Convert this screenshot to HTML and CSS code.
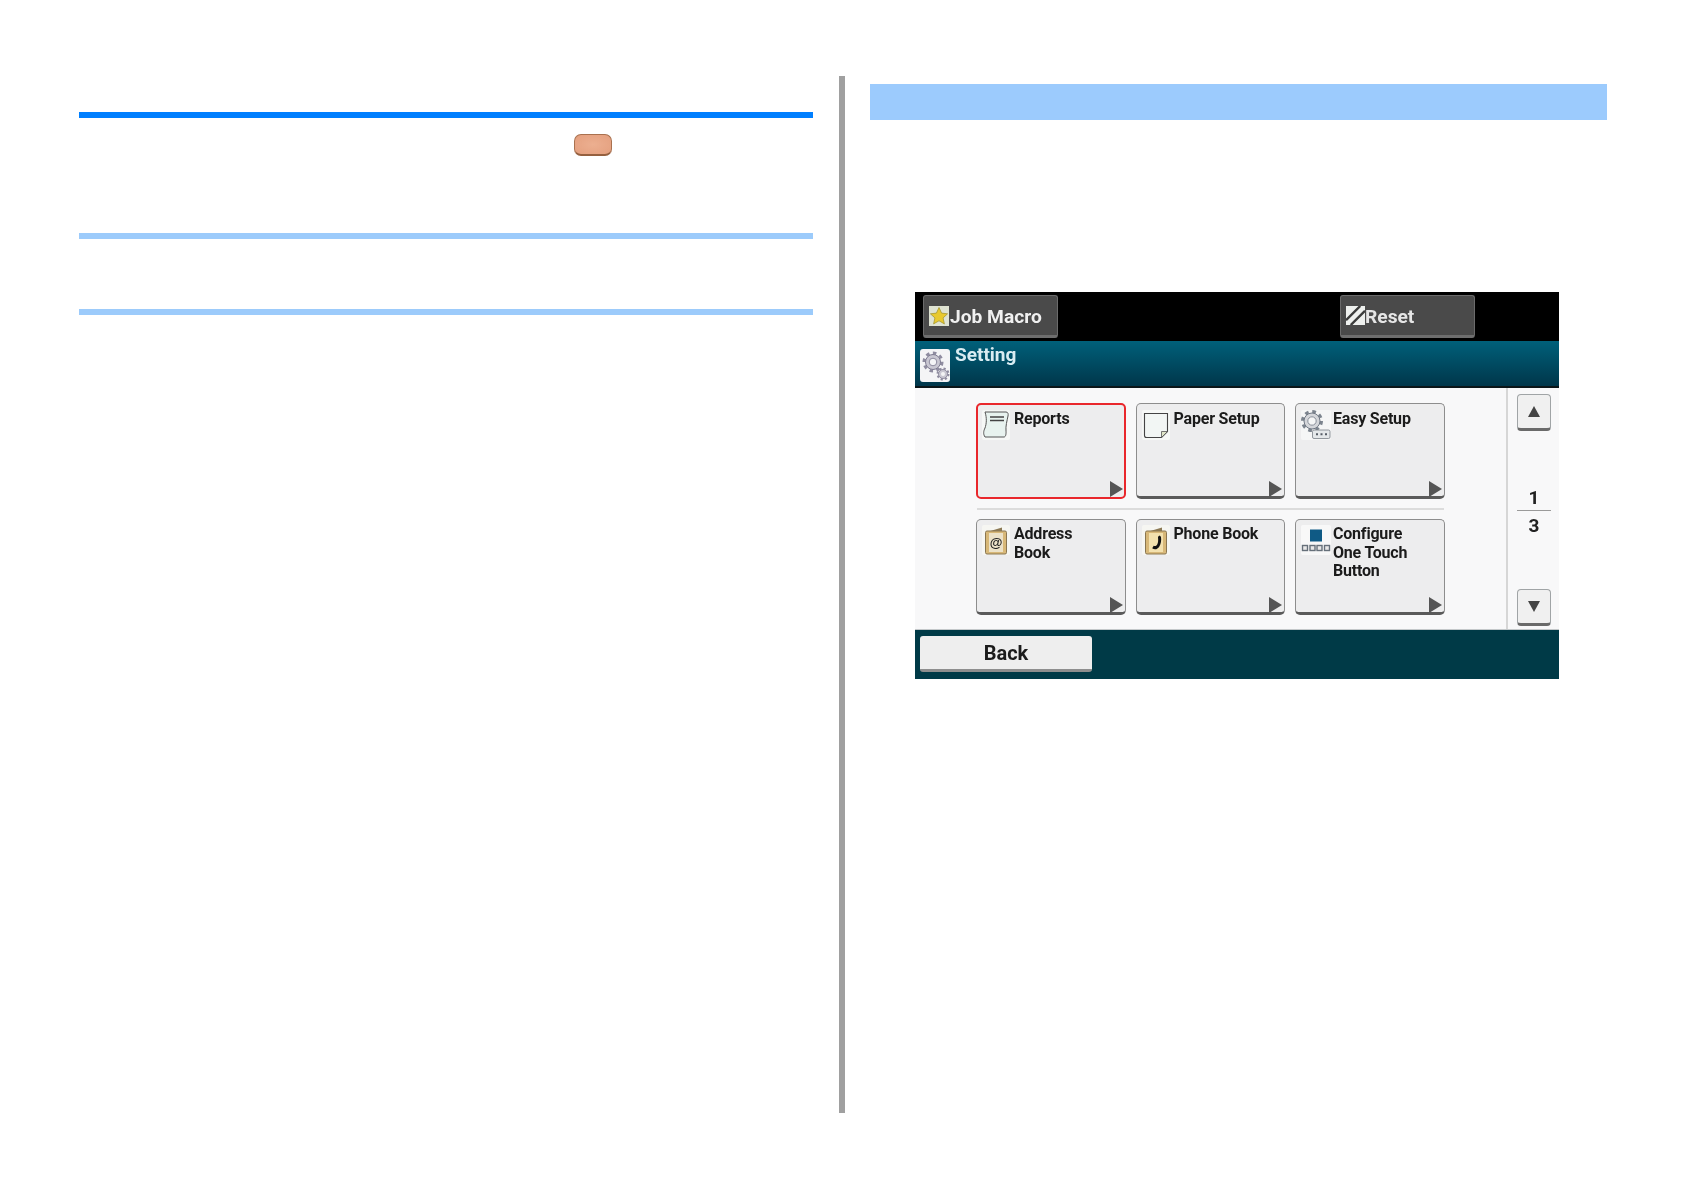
FILE: index.html
```html
<!DOCTYPE html>
<html lang="en">
<head>
<meta charset="utf-8">
<title>Setting</title>
<link rel="stylesheet" href="styles.css">
</head>
<body>
<main class="sheet">
  <section class="left">
    <div class="rule rule-strong"></div>
    <div class="key-row"><span class="key"></span></div>
    <div class="rule rule-light"></div>
    <div class="gap-row"></div>
    <div class="rule rule-light"></div>
  </section>
  <div class="divider"></div>
  <section class="right">
    <div class="band"></div>
    <div class="screen">
      <header class="topbar">
        <div class="hw-btn">
          <svg class="hw-icon" viewBox="0 0 20 20"><rect width="20" height="20" fill="#dfe3d2"/><path d="M10 1.500l2.600 5.600 6 .7-4.500 4.100 1.300 6L10 14.800 4.600 17.900l1.300-6L1.400 7.800l6-.7z" fill="#e8c92e" stroke="#9c8f2a" stroke-width=".7"/></svg>
          <span>Job Macro</span>
        </div>
        <div class="hw-btn hw-reset">
          <svg class="hw-icon hw-icon-small" viewBox="0 0 20 20"><rect width="20" height="20" fill="#eef0ee"/><path d="M0 15L15 0M5 20L20 5" stroke="#3c3c3c" stroke-width="2.600"/></svg>
          <span>Reset</span>
        </div>
      </header>
      <div class="titlebar">
        <div class="title-icon">
          <svg viewBox="0 0 30 33"><rect width="30" height="33" rx="3" fill="#f4f4f6"/><circle cx="13" cy="13" r="9" fill="none" stroke="#8f8ca0" stroke-width="3" stroke-dasharray="3.500 3.500"/><circle cx="13" cy="13" r="7.500" fill="#c9c7d2" stroke="#7d7a90"/><circle cx="13" cy="13" r="3.800" fill="#f4f4f6" stroke="#8d8a9e"/><circle cx="23" cy="25" r="5.500" fill="none" stroke="#8f8ca0" stroke-width="2" stroke-dasharray="2.200 2.100"/><circle cx="23" cy="25" r="4.500" fill="#c9c7d2" stroke="#7d7a90" stroke-width=".8"/><circle cx="23" cy="25" r="2" fill="#f4f4f6"/></svg>
        </div>
        <span class="title-text">Setting</span>
      </div>
      <div class="content">
        <div class="tiles">
          <div class="tile-row">
            <div class="tile tile-selected">
              <svg class="tile-icon" viewBox="0 0 28 30"><rect width="28" height="30" rx="2" fill="#f6f8f6"/><path d="M3 2h21c2 0 2.500 2 2 4-1 5-2.500 10-2 15 .2 2 0 6-2 6H3c-2-3-1.500-6 0-9 1.500-4 2-10 0-16z" fill="#e8f3ef" stroke="#555" stroke-width="1"/><path d="M8 7h14M8 10.500h14" stroke="#444" stroke-width="1.600"/></svg>
              <span class="tile-label">Reports</span>
              <span class="arrow"></span>
            </div>
            <div class="tile">
              <svg class="tile-icon" viewBox="0 0 28 30"><rect width="28" height="30" rx="2" fill="#f6f8f6"/><path d="M2.500 3.500h23v18l-6 6h-15c-1.200 0-2-.8-2-2z" fill="#f2f6f4" stroke="#444" stroke-width="1.100"/><path d="M25.500 21.500h-6v6z" fill="#dfe5c8" stroke="#555" stroke-width=".8"/></svg>
              <span class="tile-label">Paper Setup</span>
              <span class="arrow"></span>
            </div>
            <div class="tile">
              <svg class="tile-icon tile-icon-wide" viewBox="0 0 30 30"><rect width="30" height="30" rx="2" fill="#f5f6f6"/><circle cx="11" cy="11" r="9.500" fill="none" stroke="#7c848e" stroke-width="3" stroke-dasharray="3.700 3.760"/><circle cx="11" cy="11" r="8" fill="#d4d6da" stroke="#6e7682"/><circle cx="11" cy="11" r="4.200" fill="#f5f6f6" stroke="#8a909a"/><rect x="11.500" y="20" width="17.500" height="8.500" rx="1.500" fill="#e4e8ea" stroke="#7a8088" stroke-width=".8"/><path d="M15 24.200h2M19.500 24.200h2M24 24.200h2" stroke="#555c66" stroke-width="2"/></svg>
              <span class="tile-label">Easy Setup</span>
              <span class="arrow"></span>
            </div>
          </div>
          <div class="row-sep"></div>
          <div class="tile-row tile-row-lower">
            <div class="tile">
              <svg class="tile-icon" viewBox="0 0 28 30"><rect width="28" height="30" rx="2" fill="#f6f6f2"/><path d="M5 7L20 2.500V6z" fill="#8c7a56"/><rect x="3.500" y="6" width="21" height="23" rx="1.500" fill="#d8b878" stroke="#8a7650"/><rect x="7" y="8" width="14" height="19" fill="#ece2c8"/><text x="14" y="22" class="at-sign">@</text></svg>
              <span class="tile-label">Address<br>Book</span>
              <span class="arrow"></span>
            </div>
            <div class="tile">
              <svg class="tile-icon" viewBox="0 0 28 30"><rect width="28" height="30" rx="2" fill="#f6f6f2"/><path d="M5 7L20 2.500V6z" fill="#8c7a56"/><rect x="3.500" y="6" width="21" height="23" rx="1.500" fill="#d8b878" stroke="#8a7650"/><rect x="7" y="8" width="14" height="19" fill="#f3e1ae"/><path d="M18 10.500c-1.200.5-2 .8-2 2 .3 2.500.3 5-.8 7-.8 1.300-1.500 1.800-3.500 1.300l-1.500 2.400c2.500 2 5.500 1 7-1.500 1.800-3 2.300-6.500 1.800-9.500-.3-1.200-1-1.700-2-1.700z" fill="#111"/></svg>
              <span class="tile-label">Phone Book</span>
              <span class="arrow"></span>
            </div>
            <div class="tile">
              <svg class="tile-icon tile-icon-wide" viewBox="0 0 30 30"><rect width="30" height="30" rx="2" fill="#f8f8f8"/><rect x="9" y="4.500" width="12" height="12" fill="#0f5a85"/><g fill="#e8e8e8" stroke="#66707a" stroke-width="1.400"><rect x="1.500" y="20.500" width="5" height="5"/><rect x="9" y="20.500" width="5" height="5"/><rect x="16" y="20.500" width="5" height="5"/><rect x="23.500" y="20.500" width="5" height="5"/></g></svg>
              <span class="tile-label">Configure<br>One Touch<br>Button</span>
              <span class="arrow"></span>
            </div>
          </div>
        </div>
        <aside class="pager">
          <div class="page-btn"><span class="tri-up"></span></div>
          <div class="page-count"><span>1</span><i></i><span>3</span></div>
          <div class="page-btn"><span class="tri-down"></span></div>
        </aside>
      </div>
      <footer class="footer"><div class="back">Back</div></footer>
    </div>
  </section>
</main>
</body>
</html>
```
FILE: styles.css
```css
* { box-sizing: border-box; }
html, body { margin: 0; padding: 0; background: #fff; }
body { width: 1684px; height: 1190px; overflow: hidden; font-family: Roboto, "Liberation Sans", sans-serif; }

.sheet { display: flex; align-items: flex-start; padding: 76px 0 0 79px; }

.left { width: 734px; padding-top: 36px; display: flex; flex-direction: column; }
.rule { height: 6px; }
.rule-strong { background: #007fff; }
.rule-light { background: #9ccbfb; }
.key-row { height: 115px; padding: 16px 0 0 495px; }
.key {
  display: block; width: 38px; height: 22px; border-radius: 7px;
  background: radial-gradient(ellipse at center, #ecaf90, #e49f7e);
  border: 1px solid #a9714f; border-bottom: 2px solid #95603f;
  filter: blur(.3px);
}
.gap-row { height: 70px; }

.divider { width: 6px; height: 1037px; margin-left: 26px; background: #a0a0a0; }

.right { margin-left: 25px; width: 737px; padding-top: 8px; display: flex; flex-direction: column; }
.band { height: 36px; background: #9ccbfd; }

.screen {
  width: 644px; height: 387px; margin: 172px 0 0 45px;
  display: flex; flex-direction: column; filter: blur(.5px);
}

.topbar { height: 49px; background: #000; display: flex; padding: 3px 0 0 8px; }
.hw-btn {
  width: 135px; height: 43px; display: flex; align-items: center; gap: 1px; padding: 1px 0 0 5px;
  color: #f0f0f0; font-size: 19.200px; font-weight: 700;
  background: #4a4a4a; border: 1px solid #6b6b6b; border-bottom: 3px solid #6e6e6e; border-radius: 3px;
}
.hw-btn svg { margin-top: -1px; }
.hw-reset { margin-left: 282px; color: #e6e6e6; }
.hw-icon { width: 20px; height: 20px; flex: none; }
.hw-icon-small { width: 19px; height: 19px; margin-right: -1px; }

.titlebar {
  height: 47px; display: flex; padding: 8px 0 0 5px; gap: 5px;
  background: linear-gradient(#00607a, #00364a); border-bottom: 2px solid #0b1518;
}
.title-icon { width: 30px; height: 33px; flex: none; }
.title-icon svg { display: block; width: 30px; height: 33px; }
.title-text { color: #d9ecf2; font-size: 19px; font-weight: 700; line-height: 24px; margin-top: -6px; }

.content { height: 242px; display: flex; background: #f8f8f9; border-bottom: 1px solid #c4c8ca; }
.tiles { width: 591px; padding: 15px 0 0 61px; display: flex; flex-direction: column; }
.tile-row { display: flex; gap: 10px; }
.tile-row-lower .tile { padding-top: 5px; }
.row-sep { width: 467px; height: 2px; margin: 9.500px 0 9px 1px; background: #dcdcdc; }

.tile {
  position: relative; width: 149.500px; height: 95.500px; display: flex; gap: 3px; padding: 6px 0 0 5px;
  background: #ededee; border: 1px solid #8d8d8d; border-bottom: 3px solid #5a5a5a; border-radius: 5px;
}
.tile-selected { border: 2px solid #e9272c; padding: 5px 0 0 4px; }
.tile-icon { width: 28px; height: 30px; flex: none; }
.tile-icon-wide { width: 30px; margin-right: -2px; }
.tile-label { font-size: 16px; line-height: 18.600px; font-weight: 700; letter-spacing: -.2px; color: #1b1b1b; margin-left: 1px; }
.at-sign { font: 700 13px "Liberation Sans", sans-serif; fill: #222; text-anchor: middle; }
.arrow {
  position: absolute; right: 2px; bottom: -1px; width: 0; height: 0;
  border-left: 13px solid #555; border-top: 8px solid transparent; border-bottom: 8px solid transparent;
}
.tile-selected .arrow { right: 1px; bottom: 0; }

.pager {
  width: 53px; border-left: 2px solid #d6d6d6; padding: 6px 0 3px 9px;
  display: flex; flex-direction: column; justify-content: space-between; align-items: flex-start;
}
.page-btn {
  width: 34px; height: 37px; display: flex; align-items: center; justify-content: center;
  background: #f0f0f0; border: 1px solid #a0a4a6; border-bottom: 3px solid #6a6a6a; border-radius: 4px;
}
.tri-up, .tri-down { width: 0; height: 0; border-left: 6.500px solid transparent; border-right: 6.500px solid transparent; }
.tri-up { border-bottom: 11px solid #444; }
.tri-down { border-top: 11px solid #444; }
.page-count {
  width: 34px; display: flex; flex-direction: column; align-items: center; margin-top: 2px;
  font-size: 19px; font-weight: 700; line-height: 23px; color: #222;
}
.page-count i { display: block; width: 34px; height: 1px; background: #9a9a9a; margin: 1px 0 3px; }

.footer { flex: 1; background: #003a47; padding: 6px 0 0 5px; }
.back {
  width: 172px; height: 36px; display: flex; align-items: center; justify-content: center;
  font-size: 20px; font-weight: 700; color: #1c1c1c;
  background: #eeeeee; border-bottom: 3px solid #8e8e8e; border-radius: 3px;
}
```
